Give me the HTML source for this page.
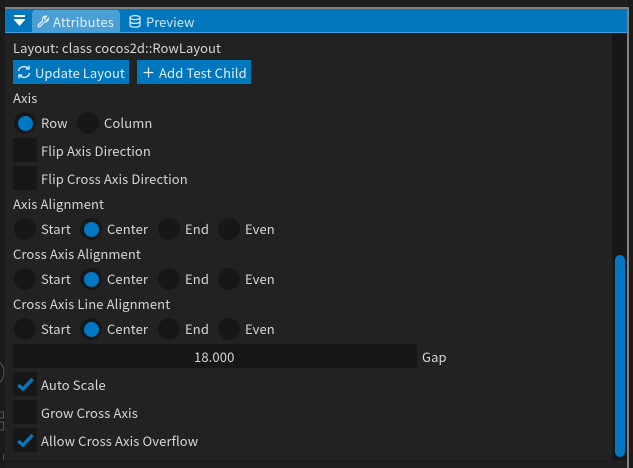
<!DOCTYPE html>
<html><head><meta charset="utf-8">
<style>
html,body{margin:0;padding:0;background:#1b1b1b;width:633px;height:468px;overflow:hidden}
#r{position:relative;width:633px;height:468px;overflow:hidden;font-family:"Noto Sans CJK JP","Liberation Sans",sans-serif;font-size:13px;letter-spacing:.12px;color:#d6d6d6}
#r div{position:absolute}
.t{white-space:nowrap;line-height:20px;height:20px}
.c{width:24px;height:24px;background:#171717;left:13px}
.o{width:22px;height:22px;border-radius:50%;background:#171717}
.o.s::after{content:"";position:absolute;left:3.5px;top:3.5px;width:15px;height:15px;border-radius:50%;background:#0078c4}
</style></head><body><div id="r">
<div style="left:5px;top:0;width:622px;height:468px;background:#222"></div>
<div style="left:5px;top:0;width:622px;height:7px;background:#1f1f1f"></div>
<div style="left:5px;top:7px;width:624px;height:2px;background:#808080"></div>
<div style="left:627px;top:7px;width:2px;height:461px;background:#808080"></div>
<div style="left:5px;top:9px;width:622px;height:23px;background:#0076bd"></div>
<div style="left:5px;top:32px;width:622px;height:1px;background:#3fa0dc"></div>
<div style="left:32px;top:10px;width:88px;height:22px;background:#4a9fd6;border-radius:4px 4px 0 0"></div>
<svg style="position:absolute;left:14px;top:15px" width="11" height="14"><rect x="0" y="0" width="11" height="2" fill="#fff"/><path d="M0 4H11V5L5.5 11L0 5Z" fill="#fff"/></svg>
<svg style="position:absolute;left:37px;top:15px" width="12" height="13" fill="none" stroke="#e8f2f9" stroke-width="1.2"><path d="M1.2 10.2L5.6 5.6C5 3.4 6 1.2 8.6 1.1L9.4 1.2L7.6 3L8.2 4.6L9.8 5.2L11.4 3.4C11.6 6 9.6 7.2 7.4 6.9L3 11.6C2 12.4 .5 11.2 1.2 10.2Z"/></svg>
<div class="t" style="left:53px;top:12px;color:#e2eef6">Attributes</div>
<svg style="position:absolute;left:129px;top:15px" width="12" height="13" fill="none" stroke="#e0edf6" stroke-width="1.2"><ellipse cx="6" cy="2.6" rx="5" ry="2"/><path d="M1 2.6V10.2C1 11.4 3.2 12.2 6 12.2S11 11.4 11 10.2V2.6M1 6.4C1 7.6 3.2 8.4 6 8.4S11 7.6 11 6.4"/></svg>
<div class="t" style="left:146px;top:12px;color:#d0e3f0;letter-spacing:0">Preview</div>
<div class="t" style="left:13px;top:38px;letter-spacing:.05px">Layout: class cocos2d::RowLayout</div>
<div style="left:13px;top:60px;width:116px;height:24px;background:#0076bd"></div>
<svg style="position:absolute;left:17px;top:65px" width="14" height="14" fill="none" stroke="#e8f2f9" stroke-width="1.3"><path d="M1.5 6A5.5 5 0 0 1 11 3.2M12 .8V4H8.8M12.5 8A5.5 5 0 0 1 3 10.8M2 13.2V10H5.2"/></svg>
<div class="t" style="left:35px;top:63px;color:#e2eef6;letter-spacing:.05px">Update Layout</div>
<div style="left:137px;top:60px;width:114px;height:24px;background:#0076bd"></div>
<svg style="position:absolute;left:143px;top:67px" width="11" height="11" stroke="#e8f2f9" stroke-width="1.2"><path d="M5.5 .5V10.5M.5 5.5H10.5"/></svg>
<div class="t" style="left:159px;top:63px;color:#e2eef6">Add Test Child</div>

<div class="t" style="left:13px;top:88px">Axis</div>
<div class="o s" style="left:14px;top:112px"></div><div class="t" style="left:41px;top:113px">Row</div>
<div class="o" style="left:77px;top:112px"></div><div class="t" style="left:104px;top:113px">Column</div>
<div class="c" style="top:138px"></div><div class="t" style="left:41px;top:141px">Flip Axis Direction</div>
<div class="c" style="top:166px"></div><div class="t" style="left:41px;top:169px">Flip Cross Axis Direction</div>

<div class="t" style="left:13px;top:194px">Axis Alignment</div>
<div class="o" style="left:14px;top:218px"></div><div class="t" style="left:41px;top:219px">Start</div>
<div class="o s" style="left:80px;top:218px"></div><div class="t" style="left:107px;top:219px">Center</div>
<div class="o" style="left:158px;top:218px"></div><div class="t" style="left:185px;top:219px">End</div>
<div class="o" style="left:218px;top:218px"></div><div class="t" style="left:245px;top:219px">Even</div>

<div class="t" style="left:13px;top:244px">Cross Axis Alignment</div>
<div class="o" style="left:14px;top:268px"></div><div class="t" style="left:41px;top:269px">Start</div>
<div class="o s" style="left:80px;top:268px"></div><div class="t" style="left:107px;top:269px">Center</div>
<div class="o" style="left:158px;top:268px"></div><div class="t" style="left:185px;top:269px">End</div>
<div class="o" style="left:218px;top:268px"></div><div class="t" style="left:245px;top:269px">Even</div>

<div class="t" style="left:13px;top:294px">Cross Axis Line Alignment</div>
<div class="o" style="left:14px;top:318px"></div><div class="t" style="left:41px;top:319px">Start</div>
<div class="o s" style="left:80px;top:318px"></div><div class="t" style="left:107px;top:319px">Center</div>
<div class="o" style="left:158px;top:318px"></div><div class="t" style="left:185px;top:319px">End</div>
<div class="o" style="left:218px;top:318px"></div><div class="t" style="left:245px;top:319px">Even</div>

<div style="left:13px;top:344px;width:404px;height:24px;background:#171717"></div>
<div class="t" style="left:194px;top:347px">18.000</div>
<div class="t" style="left:422px;top:347px">Gap</div>

<div class="c" style="top:372px"></div>
<svg style="position:absolute;left:17px;top:377px" width="17" height="15" fill="none" stroke="#0078c4" stroke-width="3.4"><path d="M1.2 8L6 12L15.6 2"/></svg>
<div class="t" style="left:41px;top:375px">Auto Scale</div>
<div class="c" style="top:400px"></div><div class="t" style="left:41px;top:403px">Grow Cross Axis</div>
<div class="c" style="top:428px"></div>
<svg style="position:absolute;left:17px;top:433px" width="17" height="15" fill="none" stroke="#0078c4" stroke-width="3.4"><path d="M1.2 8L6 12L15.6 2"/></svg>
<div class="t" style="left:41px;top:431px">Allow Cross Axis Overflow</div>

<svg style="position:absolute;left:0;top:360px" width="5" height="105" fill="none" stroke="#555" stroke-width="1"><path d="M0 3C3 5 4 9 4 12S3 20 0 22"/><path d="M0 52H3.5V58H0M0 62H3.5V70H0"/><path d="M3.5 94V100" stroke="#2f5a78"/></svg>

<div style="left:612px;top:33px;width:15px;height:427px;background:#171717"></div>
<div style="left:615px;top:255px;width:10px;height:202px;background:#0078c4;border-radius:5px"></div>
<div style="left:5px;top:460px;width:622px;height:8px;background:#1f1f1f;border-top:1px solid #1a1a1a"></div>
</div></body></html>
